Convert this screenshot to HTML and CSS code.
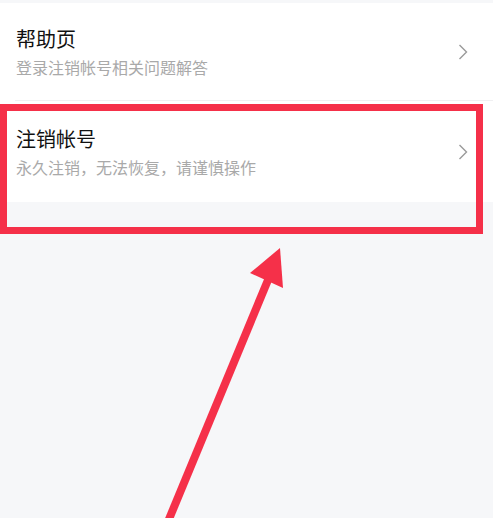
FILE: index.html
```html
<!DOCTYPE html>
<html lang="zh-CN">
  <head>
    <meta charset="UTF-8" />
    <title>注销帐号</title>
    <meta name="viewport" content="width=device-width, initial-scale=1.0" />
    <link rel="stylesheet" href="styles.css">
  </head>
  <body>
    <div class="page">
      <div class="list">
        <div class="item item-first">
          <div class="text">
            <div class="title">帮助页</div>
            <div class="sub">登录注销帐号相关问题解答</div>
          </div>
          <svg class="chevron" width="10" height="16" viewBox="0 0 10 16">
            <path d="M1.5 1 L8.5 8 L1.5 15" fill="none" stroke="#9a9a9a" stroke-width="1.4" />
          </svg>
        </div>
        <div class="item item-second">
          <div class="text">
            <div class="title">注销帐号</div>
            <div class="sub">永久注销，无法恢复，请谨慎操作</div>
          </div>
          <svg class="chevron" width="10" height="16" viewBox="0 0 10 16">
            <path d="M1.5 1 L8.5 8 L1.5 15" fill="none" stroke="#9a9a9a" stroke-width="1.4" />
          </svg>
        </div>
      </div>

      <!-- annotation overlay -->
      <div class="mark-box"></div>
      <svg class="mark-arrow" width="493" height="518" viewBox="0 0 493 518">
        <line x1="167" y1="524" x2="268" y2="280" stroke="#f53049" stroke-width="8" />
        <polygon points="280,248 250,273 283,288" fill="#f53049" />
      </svg>
    </div>
  </body>
</html>
```

FILE: styles.css
```css
body {
  margin: 0;
  font-family: 'Noto Sans CJK SC', 'Noto Sans', sans-serif;
  background-color: #f6f7f9;
  color: #222;
}
.page {
  position: relative;
  height: 518px;
  overflow: hidden;
  padding-top: 3px;
  box-sizing: border-box;
}
.list {
  background-color: #fff;
}
.item {
  display: flex;
  align-items: center;
  justify-content: space-between;
  margin-left: 15px;
  padding: 0 25px 0 1px;
}
.item-first {
  height: 97px;
  border-bottom: 1px solid #f0f0f2;
}
.item-second {
  height: 101px;
}
.title {
  font-size: 20px;
  line-height: 28px;
  color: #111;
}
.sub {
  margin-top: 3px;
  font-size: 16px;
  line-height: 22px;
  color: #a9a9a9;
}
.chevron {
  display: block;
}
.mark-box {
  position: absolute;
  left: 0;
  top: 104px;
  width: 483px;
  height: 130px;
  border: 7px solid #f53049;
  box-sizing: border-box;
}
.mark-arrow {
  position: absolute;
  left: 0;
  top: 0;
}
```
